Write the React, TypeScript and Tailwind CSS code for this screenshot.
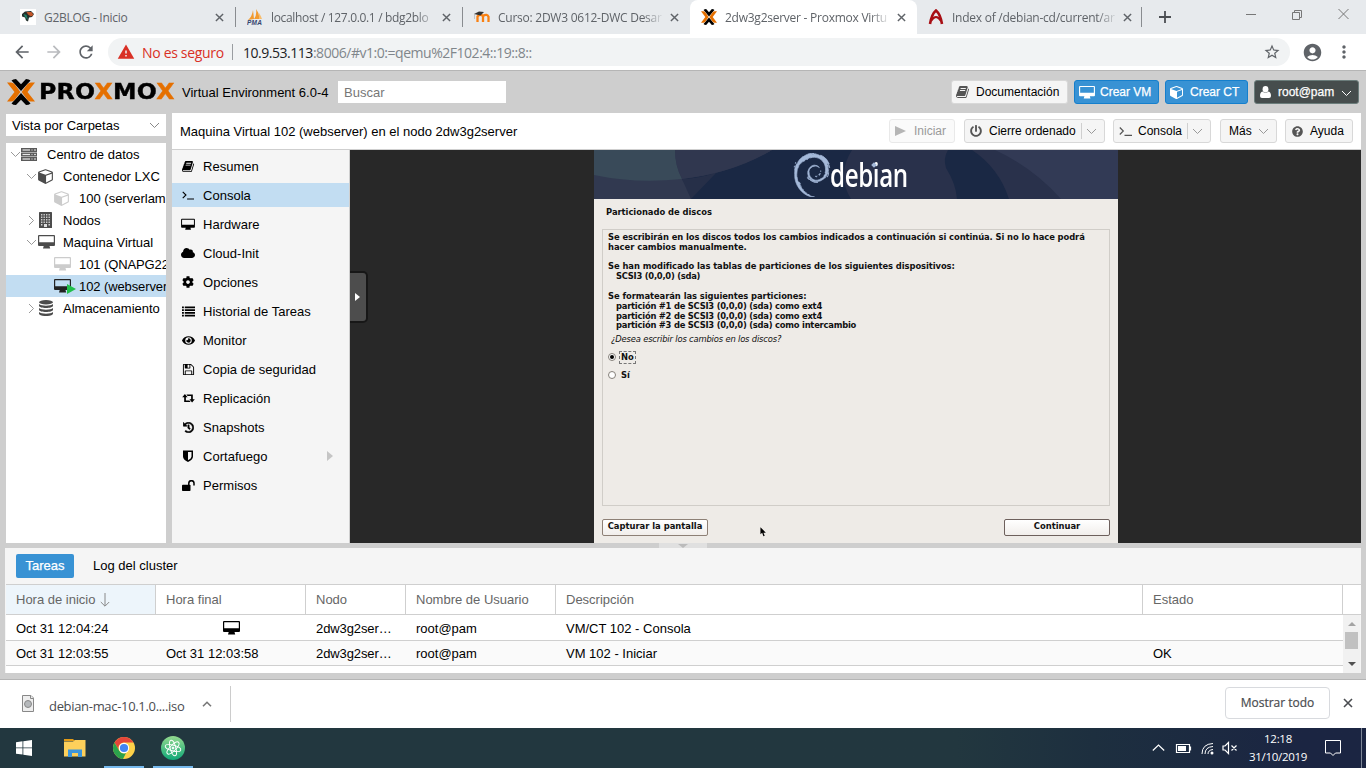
import React from "react";
import type { ReactNode } from "react";
import {
  FaCloud, FaCog, FaEye, FaHistory,
  FaPowerOff, FaQuestionCircle, FaPlay,
} from "react-icons/fa";
import { SiDebian } from "react-icons/si";
import { MdAccountCircle, MdStarBorder, MdMoreVert, MdArrowBack, MdArrowForward, MdRefresh, MdWarning } from "react-icons/md";

type P = { className?: string };

const Book = ({ className = "" }: P) => (
  <svg viewBox="0 0 1792 1792" fill="currentColor" className={className}>
    <path d="M1639 478q40 57 18 129l-275 906q-19 64-76.5 107.5t-122.5 43.5h-923q-77 0-148.5-53.5t-99.5-131.5q-24-67-2-127 0-4 3-27t4-37q1-8-3-21.5t-3-19.5q2-11 8-21t16.5-23.5 16.5-23.5q23-38 45-91.5t30-91.5q3-10 .5-30t-.5-28q3-11 17-28t17-23q21-36 42-92t25-90q1-9-2.5-32t.5-28q4-13 22-30.5t22-22.5q19-26 42.5-84.5t27.5-96.5q1-8-3-25.5t-2-26.5q2-8 9-18t18-23 17-21q8-12 16.5-30.5t15-35 16-36 19.5-32 26.5-23.5 36-11.5 47.5 5.5l-1 3q38-9 51-9h761q74 0 114 56t18 130l-274 906q-36 119-71.5 153.5t-128.5 34.5h-869q-27 0-38 15-11 16-1 43 24 70 144 70h923q29 0 56-15.5t35-41.5l300-987q7-22 5-57 38 15 59 43zm-1064 2q-4 13 2 22.5t20 9.5h608q13 0 25.5-9.5t16.5-22.5l21-64q4-13-2-22.5t-20-9.5h-608q-13 0-25.5 9.5t-16.5 22.5zm-83 256q-4 13 2 22.5t20 9.5h608q13 0 25.5-9.5t16.5-22.5l21-64q4-13-2-22.5t-20-9.5h-608q-13 0-25.5 9.5t-16.5 22.5z" />
  </svg>
);
const Desktop = ({ className = "" }: P) => (
  <svg viewBox="0 0 17 16" fill="currentColor" className={className}>
    <path fillRule="evenodd" d="M1 1h15q1 0 1 1v9q0 1-1 1h-4.500l.7 2.500H5L5.700 12H1q-1 0-1-1V2q0-1 1-1zM1.200 2.200v6h14.600v-6z" />
  </svg>
);
const Cube = ({ className = "" }: P) => (
  <svg viewBox="0 0 1664 1792" fill="currentColor" className={className}>
    <path d="M896 1629l640-349v-636l-640 233v752zm-64-865l698-254-698-254-698 254zm832-252v768q0 35-18 65t-49 47l-704 384q-28 16-61 16t-61-16l-704-384q-31-17-49-47t-18-65v-768q0-40 23-73t61-47l704-256q22-8 44-8t44 8l704 256q38 14 61 47t23 73z" />
  </svg>
);
const Floppy = ({ className = "" }: P) => (
  <svg viewBox="0 0 1792 1792" fill="currentColor" className={className}>
    <path d="M512 1536h768v-384H512v384zm896 0h128V640q0-14-10-38.5t-20-34.5l-281-281q-10-10-34-20t-39-10v416q0 40-28 68t-68 28H480q-40 0-68-28t-28-68V256H256v1280h128v-416q0-40 28-68t68-28h832q40 0 68 28t28 68v416zM1024 608V288q0-13-9.5-22.5T992 256H800q-13 0-22.5 9.5T768 288v320q0 13 9.5 22.5t22.5 9.5h192q13 0 22.5-9.5t9.5-22.5zm640 32v928q0 40-28 68t-68 28H224q-40 0-68-28t-28-68V224q0-40 28-68t68-28h928q40 0 88 20t76 48l280 280q28 28 48 76t20 88z" />
  </svg>
);
const Retweet = ({ className = "" }: P) => (
  <svg viewBox="0 0 14 10" fill="currentColor" className={className}>
    <path d="M3 0L6 3.700H4.100V7.200H8L9.400 9H2.200V3.700H0zM11 9.500L8 5.800h1.900V2.300H6L4.600.5h7.200v5.300H14z" />
  </svg>
);
const ListIcon = ({ className = "" }: P) => (
  <svg viewBox="0 0 14 11" fill="currentColor" className={className}>
    {[0, 3, 6, 9].map((y) => <path key={y} d={`M0 ${y}h2v2H0zM3 ${y}h11v2H3z`} />)}
  </svg>
);
const Shield = ({ className = "" }: P) => (
  <svg viewBox="0 0 10 12" fill="currentColor" className={className}>
    <path fillRule="evenodd" d="M0 .5h10v6q0 3-5 5.500Q0 9.500 0 6.500zM5 2v8.300q3.500-2 3.500-3.900V2z" />
  </svg>
);
const Unlock = ({ className = "" }: P) => (
  <svg viewBox="0 0 13 11" className={className}>
    <path d="M0 5.500q0-.8.8-.8h6.900q.8 0 .8.800v4.700q0 .8-.8.8H.8q-.8 0-.8-.8z" fill="currentColor" />
    <path d="M6.800 5V3.300a2.600 2.600 0 0 1 5.200 0V5.500" fill="none" stroke="currentColor" strokeWidth="1.500" />
  </svg>
);
const User = ({ className = "" }: P) => (
  <svg viewBox="0 0 11 12" fill="currentColor" className={className}>
    <ellipse cx="5.500" cy="3.300" rx="2.900" ry="3.300" />
    <path d="M2.500 5.500Q0 6 0 10q0 2 2 2h7q2 0 2-2 0-4-2.500-4.500-3 2.500-6 0z" />
  </svg>
);
const Terminal = ({ className = "" }: P) => (
  <svg viewBox="0 0 13 12" fill="none" stroke="currentColor" strokeWidth="1.2" className={className}>
    <path d="M.8 2.500 4.300 6 .8 9.500M5.500 10.400H13" />
  </svg>
);
const Server = ({ className = "" }: P) => (
  <svg viewBox="0 0 16 13" className={className}>
    {[0, 4.5, 9].map((y) => (
      <g key={y}>
        <rect x="0" y={y} width="16" height="4" fill="#5a5a5a" />
        <rect x="1.500" y={y + 1.4} width="7.500" height="1.200" fill="#e8e8e8" />
        <rect x="10" y={y + 1.4} width="2" height="1.200" fill="#999" />
        <circle cx="14" cy={y + 2} r=".8" fill="#fff" />
      </g>
    ))}
  </svg>
);
const Building = ({ className = "" }: P) => (
  <svg viewBox="0 0 13 16" className={className}>
    <rect width="13" height="16" rx=".6" fill="#4c4c4c" />
    {[2, 4.5, 7, 9.5].map((y) => [2, 4.5, 7, 9.5].map((x) => <rect key={x + "-" + y} x={x} y={y} width="1.400" height="1.500" fill="#ccc" />))}
    <path d="M2 12h1.400v1.500H2zM9.500 12h1.400v1.500H9.500zM5 12h3v3H5z" fill="#ddd" />
  </svg>
);
const Database = ({ className = "" }: P) => (
  <svg viewBox="0 0 14 16" fill="#4c4c4c" className={className}>
    <ellipse cx="7" cy="2.200" rx="7" ry="2.200" />
    {[0, 4, 8].map((y) => (
      <path key={y} d={`M0 ${y + 4}c2 2.200 12 2.200 14 0v1.800c0 3-14 3-14 0z`} />
    ))}
  </svg>
);
const Chevron = ({ className = "" }: P) => (
  <svg viewBox="0 0 11 7" fill="none" stroke="currentColor" strokeWidth="1" className={"h-[7px] w-[11px] shrink-0 " + className}>
    <path d="M1 1l4.500 4.500L10 1" />
  </svg>
);
const Close = ({ className = "" }: P) => (
  <svg viewBox="0 0 10 10" fill="none" stroke="currentColor" strokeWidth="1.600" className={className}>
    <path d="M1 1l8 8M9 1L1 9" />
  </svg>
);
const ProxX = ({ className = "" }: P) => (
  <svg viewBox="0 0 28 26" preserveAspectRatio="none" className={className}>
    <path d="M4.500 1.500Q6 0 9 0l5 5.300L19 0q3 0 4.500 1.500L14 12zM4.500 24.500Q6 26 9 26l5-5.300L19 26q3 0 4.500-1.500L14 14z" fill="#000" />
    <path d="M0 3.500h4q2 0 3.500 1.600L13.400 13l-5.900 7.900Q6 22.500 4 22.500H0L7.500 13zM28 3.500h-4q-2 0-3.500 1.600L14.600 13l5.900 7.900q1.500 1.600 3.500 1.600h4L20.500 13z" fill="#e57000" />
  </svg>
);

const tabs = [
  { title: "G2BLOG - Inicio", icon: "blog", w: "w-[236px]", pad: "pl-[20px]", track: "tracking-[-0.27px]", tw: "w-[171px]", fade: "" },
  { title: "localhost / 127.0.0.1 / bdg2blo", icon: "pma", w: "w-[227px]", pad: "pl-[11px]", track: "tracking-[-0.34px]", tw: "w-[163px]", fade: "[mask-image:linear-gradient(to_right,black_145px,transparent_166px)]" },
  { title: "Curso: 2DW3 0612-DWC Desar", icon: "moodle", w: "w-[227px]", pad: "pl-[11px]", track: "tracking-[-0.25px]", tw: "w-[164px]", fade: "[mask-image:linear-gradient(to_right,black_145px,transparent_166px)]" },
  { title: "2dw3g2server - Proxmox Virtu", icon: "prox", w: "w-[227px]", pad: "pl-[11px]", track: "tracking-[-0.25px]", tw: "w-[164px]", fade: "[mask-image:linear-gradient(to_right,black_145px,transparent_166px)]" },
  { title: "Index of /debian-cd/current/ar", icon: "acro", w: "w-[225px]", pad: "pl-[11px]", track: "tracking-[-0.25px]", tw: "w-[163px]", fade: "[mask-image:linear-gradient(to_right,black_145px,transparent_166px)]" },
];

const Favicon = ({ name }: { name: string }) => {
  if (name === "prox") return <ProxX className="h-[16px] w-[16px] shrink-0" />;
  return (
    <svg viewBox="0 0 16 16" className="h-[16px] w-[16px] shrink-0">
      {name === "blog" && (
        <g>
          <rect width="16" height="16" fill="#fff" />
          <path d="M2 5l3-2.500 6-.5 3 3-2 3-3 .5-1 4-2-1-1-3-3-1z" fill="#25302d" />
          <path d="M6.500 3h5l2 3-2.500 1.500L8 5.500z" fill="#c4572b" />
          <path d="M3.500 5l3 1 1.500 5-3-3z" fill="#21836a" />
        </g>
      )}
      {name === "pma" && (
        <g>
          <path d="M1 11Q5 8 6 1L7 10zM7 10Q10 6 9 0q4 5 3 10z" fill="#f29a2e" />
          <path d="M12 4q2 3 3 6h-3z" fill="#f8bd6d" />
          <text x="0" y="16" fontSize="6.500" fontWeight="bold" fontStyle="italic" fontFamily="Liberation Sans" fill="#34466f" textLength="15">PMA</text>
        </g>
      )}
      {name === "moodle" && (
        <g>
          <path d="M3.500 13V7.500Q6 4.500 9 7q4-2.500 5.500.8V13M9 13V7.500" fill="none" stroke="#f98012" strokeWidth="2.300" />
          <path d="M0 5l5-2.500 5 .5-3.500 3.500z" fill="#333" />
          <path d="M.5 5v5" stroke="#aaa" strokeWidth=".6" />
        </g>
      )}
      {name === "acro" && (
        <g fill="none" stroke="#a80f15" strokeWidth="2.600">
          <path d="M2 15C3 9 5 4 8 1.500 11 4 13 9 14 15" />
          <path d="M3 12Q8 4 13 12" strokeWidth="2" />
        </g>
      )}
    </svg>
  );
};

const TabStrip = () => (
  <div className="flex h-[34px] bg-[#e7eaed] text-[#5f6368]">
    {tabs.map((t, i) => (
      <div key={i} className={`flex items-center ${t.w} ${t.pad} ${i === 3 ? "rounded-t-lg bg-white" : ""}`}>
        <Favicon name={t.icon} />
        <span className={`ml-[8px] shrink-0 whitespace-nowrap font-['Open_Sans','Noto_Sans',sans-serif] text-[12px] ${t.tw} ${t.track} ${t.fade}`}>{t.title}</span>
        <Close className={`h-[9px] w-[9px] shrink-0 ${i === 0 ? "ml-[0px]" : "ml-[8px]"}`} />
        {i !== 2 && i !== 3 && <div className="ml-auto h-5 w-px bg-[#898c90]" />}
      </div>
    ))}
    <svg viewBox="0 0 12 12" className="mt-[11px] ml-[17px] h-3 w-3" stroke="#4b4e52" strokeWidth="1.800"><path d="M6 0v12M0 6h12" /></svg>
    <svg viewBox="0 0 104 12" className="mt-[8px] ml-[75px] h-3 w-[104px]" fill="none" stroke="#777" strokeWidth="1">
      <path d="M0 6.500h10M46.500 4.500h7v7h-7zM48.500 4.500v-2h7v7h-2M92.500 1l10 10M102.500 1l-10 10" />
    </svg>
  </div>
);

const Toolbar = () => (
  <div className="flex h-[36px] items-center bg-white text-[#5f6368]">
    <MdArrowBack className="ml-[12px] size-[20px]" />
    <MdArrowForward className="ml-[12px] size-[20px] text-[#b9bbbe]" />
    <MdRefresh className="ml-[12px] size-[20px]" />
    <div className="ml-[12px] flex h-[28px] w-[1182px] items-center rounded-full bg-[#f1f3f4] pl-[9px] font-['Open_Sans','Noto_Sans',sans-serif] text-[14px] whitespace-nowrap">
      <MdWarning className="size-[18px] text-[#d93025]" />
      <span className="ml-[7px] w-[85px] tracking-[-0.32px] text-[#d93025]">No es seguro</span>
      <div className="ml-[5px] h-4 w-px bg-[#9a9da1]" />
      <span className="ml-[10px] tracking-[-0.47px] text-[#80868b]"><span className="text-[#202124]">10.9.53.113</span>:8006/#v1:0:=qemu%2F102:4::19::8::</span>
      <MdStarBorder className="mr-[9px] ml-auto size-[18px]" />
    </div>
    <MdAccountCircle className="ml-[12px] size-[21px]" />
    <MdMoreVert className="ml-[11px] size-[20px]" />
  </div>
);

const Btn = ({ children, className = "" }: { children: ReactNode; className?: string }) => (
  <button className={"flex shrink-0 items-center rounded-[3px] border whitespace-nowrap " + className}>{children}</button>
);

const Header = () => (
  <div className="flex h-[42px] items-center">
    <ProxX className="ml-[7px] h-[26px] w-[28px]" />
    <span className="ml-[4px] flex h-[18px] w-[135px] items-center">
      <span className="origin-left scale-x-[1.1] font-['DejaVu_Sans'] text-[21.500px] leading-none font-bold tracking-[0.2px] [-webkit-text-stroke:0.4px_currentColor]">
        PRO<span className="text-[#e57000]">X</span>MO<span className="text-[#e57000]">X</span>
      </span>
    </span>
    <span className="ml-[8px] w-[156px] whitespace-nowrap">Virtual Environment 6.0-4</span>
    <div className="flex h-[22px] w-[168px] items-center bg-white pl-[6px] text-[#777]">Buscar</div>
    <div className="mr-[7px] ml-auto flex gap-[6px] text-[12px]">
      <Btn className="h-[24px] w-[117px] border-[#d8d8d8] bg-[#f5f5f5] pl-[4px]"><Book className="mr-[6px] size-[14px] text-[#555]" />Documentación</Btn>
      <Btn className="h-[24px] w-[85px] border-[#157fcc] bg-[#3892d4] pl-[4px] text-white"><Desktop className="mr-[5px] h-[15px] w-[16px]" /><span className="[-webkit-text-stroke:0.25px_white]">Crear VM</span></Btn>
      <Btn className="h-[24px] w-[83px] border-[#157fcc] bg-[#3892d4] pl-[4px] text-white"><Cube className="mr-[7px] h-[14px] w-[13px]" /><span className="[-webkit-text-stroke:0.25px_white]">Crear CT</span></Btn>
      <Btn className="h-[24px] w-[105px] border-[#6b7d7b] bg-[#464d4d] pl-[5px] text-white"><User className="mr-[7px] h-[12px] w-[11px]" /><span className="[-webkit-text-stroke:0.25px_white]">root@pam</span><Chevron className="mt-[3px] ml-[7px] h-[6px]" /></Btn>
    </div>
  </div>
);

const tree = [
  { label: "Centro de datos", pad: "pl-[4px]", ar: "d", icon: <Server className="h-[13px] w-[16px]" />, gap: "ml-[10px]" },
  { label: "Contenedor LXC", pad: "pl-[20px]", ar: "d", icon: <Cube className="ml-px h-[16px] w-[15px] text-[#4c4c4c]" />, gap: "ml-[10px]" },
  { label: "100 (serverlam", pad: "pl-[48px]", ar: "", icon: <Cube className="h-[16px] w-[15px] text-[#ccc]" />, gap: "ml-[10px]" },
  { label: "Nodos", pad: "pl-[20px]", ar: "r", icon: <Building className="mr-[1px] ml-[2px] h-[16px] w-[13px]" />, gap: "ml-[10px]" },
  { label: "Maquina Virtual", pad: "pl-[20px]", ar: "d", icon: <Desktop className="ml-px h-[16px] w-[17px] text-[#4c4c4c]" />, gap: "ml-[8px]" },
  { label: "101 (QNAPG22", pad: "pl-[48px]", ar: "", icon: <Desktop className="h-[16px] w-[17px] text-[#ccc]" />, gap: "ml-[8px]" },
  { label: "102 (webserver", pad: "pl-[48px]", ar: "", icon: <span className="relative"><Desktop className="h-[16px] w-[17px] text-[#222]" /><svg viewBox="0 0 9 10" className="absolute top-[6px] left-[13px] h-[10px] w-[9px]" fill="#21bf4b"><path d="M0 0l9 5-9 5z" /></svg></span>, gap: "ml-[8px]" },
  { label: "Almacenamiento", pad: "pl-[20px]", ar: "r", icon: <Database className="mr-[1px] ml-[2px] h-[16px] w-[14px]" />, gap: "ml-[9px]" },
];

const Sidebar = () => (
  <div className="flex w-[160px] flex-col pt-[1px]">
    <div className="flex h-[22px] items-center justify-between bg-white pr-[6px] pl-[6px]"><span>Vista por Carpetas</span><Chevron className="h-[6px] w-[9px] text-[#888]" /></div>
    <div className="mt-[7px] flex-1 overflow-hidden bg-white">
      {tree.map((r, i) => (
        <div key={r.label} className={`flex h-[22px] items-center whitespace-nowrap ${r.pad} ${i === 6 ? "bg-[#c2ddf2]" : ""}`}>
          {r.ar && <span className="flex w-[11px] shrink-0 justify-center"><Chevron className={`h-[6px] w-[9px] text-[#999] ${r.ar === "r" ? "-rotate-90" : ""}`} /></span>}
          <span className="shrink-0">{r.icon}</span>
          <span className={`${r.gap} ${i === 5 || i === 6 ? "tracking-[-0.1px]" : ""}`}>{r.label}</span>
        </div>
      ))}
    </div>
  </div>
);

const menu: [string, ReactNode][] = [
  ["Resumen", <Book className="size-[13px]" />],
  ["Consola", <Terminal className="h-[12px] w-[12px]" />],
  ["Hardware", <Desktop className="h-[13px] w-[14px]" />],
  ["Cloud-Init", <FaCloud className="size-[14px]" />],
  ["Opciones", <FaCog className="size-[12px]" />],
  ["Historial de Tareas", <ListIcon className="h-[11px] w-[13px]" />],
  ["Monitor", <FaEye className="size-[13px]" />],
  ["Copia de seguridad", <Floppy className="size-[13px]" />],
  ["Replicación", <Retweet className="h-[9px] w-[13px]" />],
  ["Snapshots", <FaHistory className="size-[11px] stroke-black stroke-[24px]" />],
  ["Cortafuego", <Shield className="h-[12px] w-[10px]" />],
  ["Permisos", <Unlock className="h-[11px] w-[13px]" />],
];

const Menu = () => (
  <div className="flex w-[178px] flex-col gap-[5px] border-r border-[#cfcfcf] bg-[#f5f5f5] pt-[4px]">
    {menu.map(([label, icon], i) => (
      <div key={label} className={`flex h-[24px] shrink-0 items-center pl-[9px] ${i === 1 ? "bg-[#c2ddf2]" : ""}`}>
        <span className="flex w-[14px] justify-center">{icon}</span>
        <span className="ml-[8px] tracking-[0.02px]">{label}</span>
        {label === "Cortafuego" && <svg viewBox="0 0 6 10" className="mr-[16px] ml-auto h-[10px] w-[6px]" fill="#c5c5c5"><path d="M0 0l6 5-6 5z" /></svg>}
      </div>
    ))}
  </div>
);

const DebianBanner = () => (
  <div className="relative h-[49px] overflow-hidden bg-[#1a2844]">
    <svg viewBox="0 0 524 49" className="block h-[49px] w-[524px]">
      <path d="M0 0H178Q135 24 88 29 97 41 97 49H0z" fill="#313950" />
      <path d="M88 29Q108 28 123 22L97 49Q92 38 88 29z" fill="#262f48" />
      <path d="M0 0H81Q81 15 88 29 42 34 0 25z" fill="#394a59" />
      <path d="M81 0H178Q140 23 88 29 81 16 81 0z" fill="#30374f" />
      <path d="M258 0H354Q349 8 352 18 362 34 363 49H257Q242 25 258 0z" fill="#29314b" />
      <path d="M378 0H524V49H415Q405 18 378 0z" fill="#29314b" />
      <path d="M401 0H524V49H467Q440 18 401 0z" fill="#323a55" />
    </svg>
    <SiDebian className="absolute top-[3px] left-[196px] size-[44px] stroke-[#a4b9d9] stroke-[0.35px] text-[#a4b9d9]" />
    <span className="absolute top-[3px] left-[236px] origin-left scale-x-[0.755] font-['Open_Sans','Noto_Sans',sans-serif] text-[32px] leading-[44px] font-semibold tracking-[-0.5px] text-white">debian</span>
    <span className="absolute top-[13px] left-[278px] size-[4px] rotate-45 bg-[#a4b9d9]" />
  </div>
);

const Debian = () => (
  <div className="flex w-[524px] flex-col bg-[#eeebe7] font-['DejaVu_Sans',sans-serif] text-[8.400px] leading-[9.800px] font-bold text-[#111]">
    <DebianBanner />
    <div className="mt-[9px] ml-[12px] tracking-[-0.03px]">Particionado de discos</div>
    <div className="mt-[11px] ml-[8px] h-[277px] w-[508px] border border-[#d0cdc8] pt-[3px] pl-[5px] whitespace-pre">
      <div className="tracking-[-0.08px]">Se escribirán en los discos todos los cambios indicados a continuación si continúa. Si no lo hace podrá</div>
      <div className="tracking-[-0.02px]">hacer cambios manualmente.</div>
      <div className="mt-[10px] tracking-[-0.07px]">Se han modificado las tablas de particiones de los siguientes dispositivos:</div>
      <div className="pl-[8px] tracking-[-0.25px]">SCSI3 (0,0,0) (sda)</div>
      <div className="mt-[10px] tracking-[-0.06px]">Se formatearán las siguientes particiones:</div>
      <div className="pl-[8px] tracking-[-0.23px]">partición #1 de SCSI3 (0,0,0) (sda) como ext4</div>
      <div className="pl-[8px] tracking-[-0.23px]">partición #2 de SCSI3 (0,0,0) (sda) como ext4</div>
      <div className="pl-[8px] tracking-[-0.23px]">partición #3 de SCSI3 (0,0,0) (sda) como intercambio</div>
      <div className="mt-[4px] pl-[3px] font-normal tracking-[-0.17px] italic">¿Desea escribir los cambios en los discos?</div>
      <div className="mt-[6px] flex h-[13px] items-center">
        <span className="flex size-[8px] items-center justify-center rounded-full border border-[#85807a] bg-white"><span className="size-[4px] rounded-full bg-black" /></span>
        <span className="ml-[3px] flex h-[13px] items-center border border-dashed border-[#777] px-[1px]">No</span>
      </div>
      <div className="mt-[5px] flex h-[13px] items-center">
        <span className="size-[8px] rounded-full border border-[#85807a] bg-white" />
        <span className="ml-[5px]">Sí</span>
      </div>
    </div>
    <div className="mt-[12px] flex items-center px-[8px]">
      <Btn className="h-[17px] w-[106px] justify-center !rounded-[2px] border-[#8d8076] bg-gradient-to-b from-white to-[#f1eeeb]">Capturar la pantalla</Btn>
      <svg viewBox="0 0 7 11" className="mt-[9px] ml-[52px] h-[10px] w-[6px]"><path d="M.5 0v8l2-1.500L4 10.500l1.500-.7L4 6.300h2.800z" fill="#000" /></svg>
      <Btn className="ml-auto h-[17px] w-[106px] justify-center !rounded-[2px] border-[#6d605c] bg-gradient-to-b from-white to-[#f1eeeb]">Continuar</Btn>
    </div>
  </div>
);

const gray = "border-[#d8d8d8] bg-[#f5f5f5] h-[24px]";
const Split = () => (
  <>
    <span className="ml-auto h-[16px] w-px bg-[#cfcfcf]" />
    <Chevron className="mr-[7px] ml-[4px] h-[6px] w-[10px] text-[#999]" />
  </>
);

const VmPanel = () => (
  <div className="flex w-[1189px] flex-col">
    <div className="flex h-[37px] items-center border-b border-[#cfcfcf] bg-white pr-[8px] pl-[8px] text-[12px]">
      <span className="text-[13px]">Maquina Virtual 102 (webserver) en el nodo 2dw3g2server</span>
      <Btn className="ml-auto h-[24px] w-[66px] border-[#e9e9e9] bg-[#fafafa] pl-[5px] text-[#999]"><svg viewBox="0 0 11 10" className="mr-[8px] h-[10px] w-[11px]" fill="#b5b5b5"><path d="M0 0l11 5-11 5z" /></svg>Iniciar</Btn>
      <Btn className={`ml-[9px] w-[141px] pl-[5px] ${gray}`}><FaPowerOff className="mr-[7px] size-[12px] text-[#555]" />Cierre ordenado<Split /></Btn>
      <Btn className={`ml-[8px] w-[98px] pl-[5px] ${gray}`}><Terminal className="mr-[6px] h-[12px] w-[13px] text-[#555]" />Consola<Split /></Btn>
      <Btn className={`ml-[9px] w-[57px] pl-[8px] ${gray}`}>Más<Chevron className="mr-[7px] ml-auto h-[6px] w-[10px] text-[#999]" /></Btn>
      <Btn className={`ml-[8px] w-[68px] pl-[6px] ${gray}`}><FaQuestionCircle className="mr-[7px] size-[11px] text-[#555]" />Ayuda</Btn>
    </div>
    <div className="flex min-h-0 flex-1">
      <Menu />
      <div className="relative flex w-[1011px] bg-[#282828] pl-[244px]">
        <Debian />
        <div className="absolute top-[121px] left-0 flex h-[52px] w-[18px] items-center justify-center rounded-r-[5px] border-y-2 border-r-2 border-[#171717] bg-[#4d4d4d]">
          <svg viewBox="0 0 5 8" className="mr-[1px] h-[8px] w-[5px]" fill="#fff"><path d="M0 0l5 4-5 4z" /></svg>
        </div>
      </div>
    </div>
  </div>
);

const cols = "grid grid-cols-[150px_150px_100px_150px_587px_200px] [&>span]:pl-[10px] items-center";

const Tasks = () => (
  <div className="ml-[5px] flex h-[125px] w-[1356px] flex-col overflow-hidden bg-[#f5f5f5]">
    <div className="flex h-[36px] shrink-0 items-center pl-[11px]">
      <span className="flex h-[24px] w-[58px] items-center justify-center rounded-[2px] bg-[#3892d4] pb-px text-white [-webkit-text-stroke:0.25px_white]">Tareas</span>
      <span className="mb-[2px] ml-[19px]">Log del cluster</span>
    </div>
    <div className="ml-[1px] flex h-[31px] w-[1355px] shrink-0 border-y border-[#cfcfcf] bg-white text-[#666]">
      <div className={`${cols} h-[29px] !items-stretch [&>span]:flex [&>span]:items-center [&>span]:border-r [&>span]:border-[#cfcfcf]`}>
        <span className="bg-[#edf5fb]">Hora de inicio
          <svg viewBox="0 0 10 14" className="ml-[4px] h-[14px] w-[10px]" fill="none" stroke="#888"><path d="M5 0v13M.8 9L5 13.200 9.200 9" /></svg>
        </span>
        <span>Hora final</span><span>Nodo</span><span>Nombre de Usuario</span><span>Descripción</span><span>Estado</span>
      </div>
    </div>
    <div className="ml-[1px] flex w-[1354px] flex-1 bg-white">
      <div className="w-[1337px]">
        <div className={`${cols} h-[26px] border-b border-[#cfcfcf] pt-[2px]`}>
          <span>Oct 31 12:04:24</span><span className="-mt-[2px] flex justify-center !pl-0"><Desktop className="h-[16px] w-[17px]" /></span><span className="tracking-[-0.1px]">2dw3g2ser…</span><span>root@pam</span><span>VM/CT 102 - Consola</span><span />
        </div>
        <div className={`${cols} h-[25px] border-b border-[#cfcfcf] bg-[#fafafa]`}>
          <span>Oct 31 12:03:55</span><span>Oct 31 12:03:58</span><span className="tracking-[-0.1px]">2dw3g2ser…</span><span>root@pam</span><span>VM 102 - Iniciar</span><span>OK</span>
        </div>
      </div>
      <div className="flex flex-1 flex-col items-center bg-[#f1f1f1]">
        <svg viewBox="0 0 8 4" className="mt-[7px] h-[4px] w-[8px]" fill="#a3a3a3"><path d="M4 0l4 4H0z" /></svg>
        <div className="mt-[6px] h-[17px] w-[13px] bg-[#c1c1c1]" />
        <svg viewBox="0 0 8 4" className="mt-[13px] h-[4px] w-[8px]" fill="#505050"><path d="M0 0h8L4 4z" /></svg>
      </div>
    </div>
  </div>
);

const Downloads = () => (
  <div className="flex h-[49px] items-center border-t border-[#b5b5b5] bg-white font-['Open_Sans','Noto_Sans',sans-serif] text-[#4a4c50]">
    <svg viewBox="0 0 12 17" className="mb-[2px] ml-[22px] h-[17px] w-[12px]" fill="#eee" stroke="#888"><path d="M.5.5H9l2.500 2.500v13.500H.5z" /><circle cx="6" cy="9" r="3.500" fill="#b5b8bb" /><path d="M8.500.5v3h3" /></svg>
    <span className="mt-[4px] ml-[15px] w-[137px] text-[13px] tracking-[-0.32px] whitespace-nowrap">debian-mac-10.1.0....iso</span>
    <svg viewBox="0 0 10 6" className="ml-[16px] h-[6px] w-[10px]" fill="none" stroke="#777" strokeWidth="1.600"><path d="M1 5.300l4-4 4 4" /></svg>
    <div className="ml-[18px] h-[36px] w-px bg-[#ccc]" />
    <div className="mb-[2px] ml-auto flex h-[32px] w-[105px] items-center justify-center rounded-[4px] border border-[#d8dade] pb-px text-[12px] tracking-[-0.03px] [-webkit-text-stroke:0.2px_#4a4c50]">Mostrar todo</div>
    <Close className="mr-[13px] mb-[2px] ml-[13px] size-[10px]" />
  </div>
);

const Taskbar = () => (
  <div className="flex h-[40px] items-center bg-gradient-to-r from-[#22373f] from-70% via-[#1d2f3f] via-80% to-[#1b2542] to-95% font-['Open_Sans','Noto_Sans',sans-serif] text-white">
    <svg viewBox="0 0 16 16" className="ml-[16px] size-[16px]" fill="#fff"><path d="M0 2.200l6.500-.9v6.200H0zM7.300 1.200L16 0v7.500H7.300zM0 8.300h6.500v6.300L0 13.700zM7.300 8.300H16V16l-8.700-1.200z" /></svg>
    <svg viewBox="0 0 22 18" className="ml-[32px] h-[18px] w-[22px]"><path d="M0 0h9l2 2H0z" fill="#e39b16" /><path d="M0 2.500h9L11 1h10.500v16.500H0z" fill="#fdd05b" /><path d="M4 10.500h14v7.500h-4v-4H8v4H4z" fill="#3d96dc" /></svg>
    <div className="ml-[18px] flex h-[40px] w-[40px] flex-col items-center border-b-2 border-[#76b9ed] pt-[9px]">
      <svg viewBox="0 0 22 22" className="size-[22px]">
        <circle cx="11" cy="11" r="11" fill="#fdd149" />
        <path d="M1.500 5.500A11 11 0 0 1 20.500 5.500H11A5.500 5.500 0 0 0 6 13.500z" fill="#e5463a" />
        <path d="M1.500 5.500L6.200 13.700A5.500 5.500 0 0 0 13 16L10 22A11 11 0 0 1 1.500 5.500" fill="#2ba24c" />
        <circle cx="11" cy="11" r="5.200" fill="#fff" /><circle cx="11" cy="11" r="4.100" fill="#4285f4" />
      </svg>
    </div>
    <div className="ml-[9px] flex h-[40px] w-[40px] flex-col items-center border-b-2 border-[#76b9ed] pt-[8px]">
      <svg viewBox="0 0 24 24" className="size-[24px]" fill="none" stroke="#fff" strokeWidth="1">
        <defs><linearGradient id="atom" x2="0" y2="1"><stop stopColor="#93d98e" /><stop offset="1" stopColor="#0fa878" /></linearGradient></defs>
        <circle cx="12" cy="12" r="12" fill="url(#atom)" stroke="none" />
        <ellipse cx="12" cy="12" rx="2.800" ry="8" transform="rotate(-15 12 12)" />
        <ellipse cx="12" cy="12" rx="2.800" ry="8" transform="rotate(45 12 12)" />
        <ellipse cx="12" cy="12" rx="2.800" ry="8" transform="rotate(105 12 12)" />
        <circle cx="12" cy="12" r="1" fill="#fff" />
      </svg>
    </div>
    <svg viewBox="0 0 86 14" className="ml-auto h-[14px] w-[86px]" fill="none" stroke="#fff" strokeWidth="1.200">
      <path d="M.8 9.500L6.500 4l5.700 5.500" />
      <path d="M24.500 3.500h13v8h-13zM38.500 5.500v4" /><path d="M26 5h8v5h-8z" fill="#fff" stroke="none" />
      <path d="M50 13Q50 3 61 2.500M53 13Q53 6 61 5.500M56 13Q56 9 61 8.500" strokeWidth="1" /><circle cx="60" cy="12" r="1.500" fill="#fff" stroke="none" />
      <path d="M71 5h2l3.500-3.500v11L73 9h-2zM79.500 4.500l5 5M84.500 4.500l-5 5" strokeWidth="1.200" />
    </svg>
    <div className="ml-[9px] w-[62px] text-center text-[11.500px] leading-[18px] tracking-[-0.3px] whitespace-nowrap"><div>12:18</div><div>31/10/2019</div></div>
    <svg viewBox="0 0 16 16" className="ml-[16px] size-[16px]" fill="none" stroke="#fff"><path d="M.5.5h15v12.500h-5L8 15.500 5.500 13h-5z" /></svg>
    <div className="mr-[4px] ml-[20px] h-[40px] w-px bg-[#7d8696]" />
  </div>
);

export default function App() {
  return (
    <div className="flex h-[768px] w-[1366px] flex-col overflow-hidden bg-[#cecece] font-['Liberation_Sans',sans-serif] text-[13px] leading-[17px] text-black">
      <TabStrip />
      <Toolbar />
      <div className="h-[609px] border-t border-[#b5b5b5]">
        <Header />
        <div className="flex h-[430px] gap-[6px] pl-[6px]">
          <Sidebar />
          <VmPanel />
        </div>
        <div className="flex h-[5px] justify-center"><div className="flex h-[5px] w-[48px] justify-center bg-[#e0e0e0]"><svg viewBox="0 0 10 4" className="mt-[1px] h-[4px] w-[10px]" fill="#bbb"><path d="M0 0h10L5 4z" /></svg></div></div>
        <Tasks />
      </div>
      <Downloads />
      <Taskbar />
    </div>
  );
}
